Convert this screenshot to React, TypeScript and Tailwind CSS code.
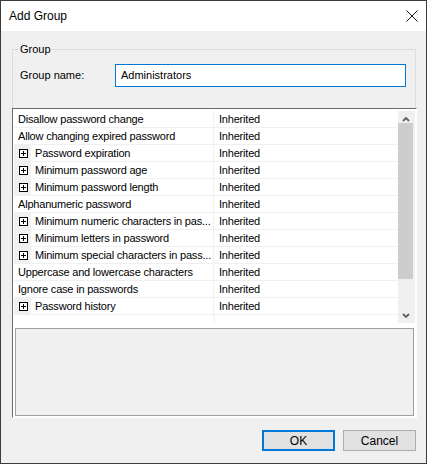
const ROWS: { label: string; plus?: boolean }[] = [
  { label: "Disallow password change" },
  { label: "Allow changing expired password" },
  { label: "Password expiration", plus: true },
  { label: "Minimum password age", plus: true },
  { label: "Minimum password length", plus: true },
  { label: "Alphanumeric password" },
  { label: "Minimum numeric characters in pas...", plus: true },
  { label: "Minimum letters in password", plus: true },
  { label: "Minimum special characters in pass...", plus: true },
  { label: "Uppercase and lowercase characters" },
  { label: "Ignore case in passwords" },
  { label: "Password history", plus: true },
];

function PlusBox() {
  return (
    <svg width="9" height="9" viewBox="0 0 9 9" shapeRendering="crispEdges">
      <rect x="0.5" y="0.5" width="8" height="8" fill="white" stroke="#000" />
      <path d="M2 4.5h5M4.5 2v5" stroke="#000" />
    </svg>
  );
}

function Chevron({ down }: { down?: boolean }) {
  return (
    <svg width="8" height="5" viewBox="0 0 8 5">
      <path
        d={down ? "M1 1l3 3 3-3" : "M1 4l3-3 3 3"}
        fill="none"
        stroke="#606060"
        strokeWidth="1.8"
      />
    </svg>
  );
}

export default function App() {
  return (
    <div
      className="w-[427px] h-[464px] border border-[#3c3c3c] bg-[#f0f0f0] flex flex-col text-[11px] text-black"
      style={{ fontFamily: '"Liberation Sans", Arial, sans-serif' }}
    >
      {/* Title bar */}
      <div className="h-[30px] bg-white flex items-center justify-between pl-[8px] pr-[8px]">
        <span className="text-[12px]">Add Group</span>
        <svg width="12" height="12" viewBox="0 0 12 12">
          <path d="M0.5 0.5l11 11M11.5 0.5l-11 11" stroke="#111" strokeWidth="1" />
        </svg>
      </div>

      <div className="pl-[11px] pt-[10px]">
        {/* Group box */}
        <fieldset className="w-[404px] h-[67px] border border-b-0 border-[#dcdcdc] pl-[7px]">
          <legend className="px-[1px] h-[16px] leading-[16px] -ml-[1px]">Group</legend>
          <div className="flex items-center mt-[7px]">
            <span className="w-[95px]">Group name:</span>
            <div className="w-[291px] h-[23px] border border-[#0078d7] bg-white flex items-center pl-[5px]">
              Administrators
            </div>
          </div>
        </fieldset>

        {/* Property grid */}
        <div className="w-[405px] h-[310px] border-l border-t border-[#6b6b6b] border-r border-b border-r-white border-b-white bg-white pl-[1px] pt-[2px] pr-[1px] flex flex-col">
          <div className="flex h-[212px]">
            <div className="w-[384px] flex flex-col tracking-[-0.2px]">
              {ROWS.map((r) => (
                <div key={r.label} className="flex h-[17px] border-b border-[#f0f0f0]">
                  <div className="w-[200px] shrink-0 flex items-center border-r border-[#f0f0f0] whitespace-nowrap overflow-hidden">
                    {r.plus ? (
                      <>
                        <div className="w-[17px] shrink-0 h-full bg-[#f0f0f0] flex items-center pl-[5px]">
                          <PlusBox />
                        </div>
                        <span className="pl-[4px]">{r.label}</span>
                      </>
                    ) : (
                      <span className="pl-[4px]">{r.label}</span>
                    )}
                  </div>
                  <div className="flex-1 flex items-center pl-[5px]">Inherited</div>
                </div>
              ))}
              <div className="flex-1 flex">
                <div className="w-[201px] border-r border-[#f0f0f0]" />
              </div>
            </div>
            {/* Scrollbar */}
            <div className="w-[17px] bg-[#f0f0f0] flex flex-col">
              <div className="h-[12px] flex items-end justify-center pr-[1px] pb-[1px]">
                <Chevron />
              </div>
              <div className="h-[156px] w-[15px] bg-[#cdcdcd]" />
              <div className="flex-1 flex items-end justify-center pr-[1px] pb-[5px]">
                <Chevron down />
              </div>
            </div>
          </div>
          {/* Description area */}
          <div className="mt-[5px] mx-[1px] h-[88px] border border-[#a0a0a0] bg-[#f0f0f0]" />
        </div>

        {/* Buttons */}
        <div className="flex justify-end gap-[8px] w-[405px] mt-[12px] pr-[1px]">
          <button className="w-[73px] h-[21px] border-2 border-[#0078d7] bg-[#e1e1e1] text-[12px]">
            OK
          </button>
          <button className="w-[73px] h-[21px] border border-[#adadad] bg-[#e1e1e1] text-[12px]">
            Cancel
          </button>
        </div>
      </div>
    </div>
  );
}
